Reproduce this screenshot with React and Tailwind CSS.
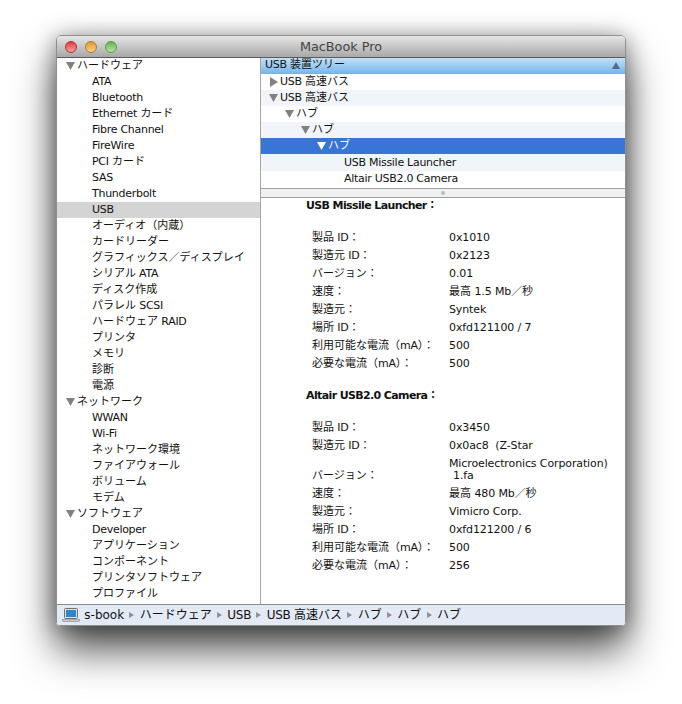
import React from 'react';

const font = { fontFamily: '"DejaVu Sans", "Noto Sans CJK JP", sans-serif' };

const sidebar = [
  { group: 'ハードウェア', items: ['ATA', 'Bluetooth', 'Ethernet カード', 'Fibre Channel', 'FireWire', 'PCI カード', 'SAS', 'Thunderbolt', 'USB', 'オーディオ（内蔵）', 'カードリーダー', 'グラフィックス／ディスプレイ', 'シリアル ATA', 'ディスク作成', 'パラレル SCSI', 'ハードウェア RAID', 'プリンタ', 'メモリ', '診断', '電源'] },
  { group: 'ネットワーク', items: ['WWAN', 'Wi-Fi', 'ネットワーク環境', 'ファイアウォール', 'ボリューム', 'モデム'] },
  { group: 'ソフトウェア', items: ['Developer', 'アプリケーション', 'コンポーネント', 'プリンタソフトウェア', 'プロファイル'] },
];

const missile = [
  ['製品 ID：', '0x1010'],
  ['製造元 ID：', '0x2123'],
  ['バージョン：', '0.01'],
  ['速度：', '最高 1.5 Mb／秒'],
  ['製造元：', 'Syntek'],
  ['場所 ID：', '0xfd121100 / 7'],
  ['利用可能な電流（mA）：', '500'],
  ['必要な電流（mA）：', '500'],
];

const camera = [
  ['速度：', '最高 480 Mb／秒'],
  ['製造元：', 'Vimicro Corp.'],
  ['場所 ID：', '0xfd121200 / 6'],
  ['利用可能な電流（mA）：', '500'],
  ['必要な電流（mA）：', '256'],
];

// latin runs are tighter than the CJK ones, DejaVu is a bit wider than the original face
function T({ children, kind = 'text' }) {
  const tracking = { text: 'tracking-[-0.28px]', value: 'tracking-[-0.12px]', bold: 'tracking-[-0.62px]' }[kind];
  const parts = String(children).split(/([\x20-\x7e]+)/).filter(Boolean);
  return parts.map((p, i) =>
    /[\x20-\x7e]/.test(p[0])
      ? <span key={i} className={tracking}>{p}</span>
      : <span key={i}>{p}</span>
  );
}

function Down({ color = '#808080' }) {
  return (
    <svg width="9" height="8" viewBox="0 0 9 8" className="shrink-0">
      <path d="M0 0H9L4.5 8Z" fill={color} />
    </svg>
  );
}

function Right({ w = 8, h = 10, color = '#808080' }) {
  return (
    <svg width={w} height={h} viewBox="0 0 8 10" className="shrink-0">
      <path d="M0 0L8 5L0 10Z" fill={color} />
    </svg>
  );
}

function Crumb() {
  return <Right w={5} h={6} color="#8a8d94" />;
}

function Row({ label, value, indent = false }) {
  return (
    <div className="flex h-[18px] items-center">
      <div className="w-[137px] shrink-0 whitespace-nowrap"><T>{label}</T></div>
      <div className={indent ? 'whitespace-nowrap pl-[4px]' : 'whitespace-nowrap'}><T kind="value">{value}</T></div>
    </div>
  );
}

function TreeRow({ className = '', children }) {
  return <div className={`flex h-4 items-center whitespace-nowrap ${className}`}>{children}</div>;
}

export default function App() {
  return (
    <div className="h-[704px] w-[682px] overflow-hidden bg-white pl-[56px] pt-[35px]" style={font}>
      <div className="flex h-[591px] w-[570px] flex-col overflow-hidden rounded-t-[5px] rounded-b-[4px] border border-[#8f8f8f] text-[11px] text-[#111] shadow-[0_24px_40px_rgba(0,0,0,0.68),0_2px_22px_rgba(0,0,0,0.4)]">
        {/* title bar */}
        <div className="relative flex h-[22px] shrink-0 items-center justify-center border-b border-[#5c5c5c] bg-gradient-to-b from-[#e6e6e6] to-[#a9a9a9]">
          <div className="absolute left-[8px] top-[5px] flex gap-2">
            <div className="size-3 rounded-full border border-[#a33] bg-gradient-to-b from-[#d9383c] to-[#f8a0a0]" />
            <div className="size-3 rounded-full border border-[#a97a2c] bg-gradient-to-b from-[#e2962c] to-[#fbd18a]" />
            <div className="size-3 rounded-full border border-[#5c9a4c] bg-gradient-to-b from-[#64b054] to-[#b7e6a4]" />
          </div>
          <span className="text-[12.8px] text-[#444]">MacBook Pro</span>
        </div>

        <div className="flex min-h-0 flex-1">
          {/* sidebar */}
          <div className="w-[204px] shrink-0 border-r border-[#a5a5a5] bg-white">
            {sidebar.map((s) => (
              <div key={s.group}>
                <div className="flex h-4 items-center gap-[2px] pl-[9px]">
                  <Down />
                  <span>{s.group}</span>
                </div>
                {s.items.map((item) => (
                  <div key={item} className={`flex h-4 items-center whitespace-pre pl-[35px] ${item === 'USB' ? 'bg-[#d4d4d4]' : ''}`}>
                    <span><T>{item}</T></span>
                  </div>
                ))}
              </div>
            ))}
          </div>

          {/* right pane */}
          <div className="flex min-w-0 flex-1 flex-col bg-white">
            <div className="flex h-4 shrink-0 items-center justify-between border-b border-[#7fb0d6] bg-gradient-to-b from-[#c3e0f8] to-[#79b8ec] pl-[4px] pr-[5px]">
              <span><T>USB 装置ツリー</T></span>
              <svg width="8" height="7" viewBox="0 0 8 7">
                <path d="M4 0L8 7H0Z" fill="#4d6c88" />
              </svg>
            </div>
            <TreeRow className="gap-[2px] pl-[9px]"><Right /><span><T>USB 高速バス</T></span></TreeRow>
            <TreeRow className="gap-[2px] bg-[#f1f5fa] pl-[8px]"><Down /><span><T>USB 高速バス</T></span></TreeRow>
            <TreeRow className="gap-[2px] pl-[24px]"><Down /><span>ハブ</span></TreeRow>
            <TreeRow className="gap-[2px] bg-[#f1f5fa] pl-[40px]"><Down /><span>ハブ</span></TreeRow>
            <TreeRow className="gap-[2px] bg-[#3875d7] pl-[56px] text-white"><Down color="#fff" /><span>ハブ</span></TreeRow>
            <TreeRow className="h-[17px] bg-[#f1f5fa] pl-[83px] pt-px"><span><T>USB Missile Launcher</T></span></TreeRow>
            <TreeRow className="pl-[83px]"><span><T>Altair USB2.0 Camera</T></span></TreeRow>

            {/* splitter */}
            <div className="mt-px flex h-[10px] shrink-0 items-center justify-center border-y border-[#a0a0a0] bg-[#f0f0f0]">
              <div className="size-[4px] rounded-full bg-[#bbb]" />
            </div>

            {/* details */}
            <div className="min-h-0 flex-1 pl-[45px] pt-[2px]">
              <div className="flex h-[12px] items-center whitespace-pre font-bold"><span><T kind="bold">USB Missile Launcher</T>：</span></div>
              <div className="mt-[17px] pl-[6px]">
                {missile.map(([k, v]) => <Row key={k} label={k} value={v} />)}
              </div>
              <div className="mt-[14px] flex h-[18px] items-center whitespace-pre font-bold"><span><T kind="bold">Altair USB2.0 Camera</T>：</span></div>
              <div className="mt-[14px] pl-[6px]">
                <Row label="製品 ID：" value="0x3450" />
                <div className="flex h-[30px] items-start leading-[18px]">
                  <div className="w-[137px] shrink-0"><T>製造元 ID：</T></div>
                  <div className="whitespace-pre"><T kind="value">{'0x0ac8  (Z-Star'}</T><br /><T kind="value">Microelectronics Corporation)</T></div>
                </div>
                <Row label="バージョン：" value="1.fa" indent />
                {camera.map(([k, v]) => <Row key={k} label={k} value={v} />)}
              </div>
            </div>
          </div>
        </div>

        {/* path bar */}
        <div className="flex h-[21px] shrink-0 items-center gap-[5.3px] whitespace-pre border-t border-[#8c8c8c] bg-[#e3e9f5] pl-[5px] text-[12px]">
          <svg width="18" height="14" viewBox="0 0 18 14" className="mr-[-1px] shrink-0">
            <rect x="2.5" y="0.5" width="13" height="10" rx="1" fill="#dfe3e8" stroke="#6c7076" />
            <rect x="4" y="2" width="10" height="7" fill="#2f86c6" />
            <path d="M0 11.5H18L17 13.5H1Z" fill="#c4c8ce" stroke="#777" strokeWidth="0.5" />
          </svg>
          <span>s-book</span><Crumb />
          <span>ハードウェア</span><Crumb />
          <span><T>USB</T></span><Crumb />
          <span><T>USB 高速バス</T></span><Crumb />
          <span>ハブ</span><Crumb />
          <span>ハブ</span><Crumb />
          <span>ハブ</span>
        </div>
      </div>
    </div>
  );
}
